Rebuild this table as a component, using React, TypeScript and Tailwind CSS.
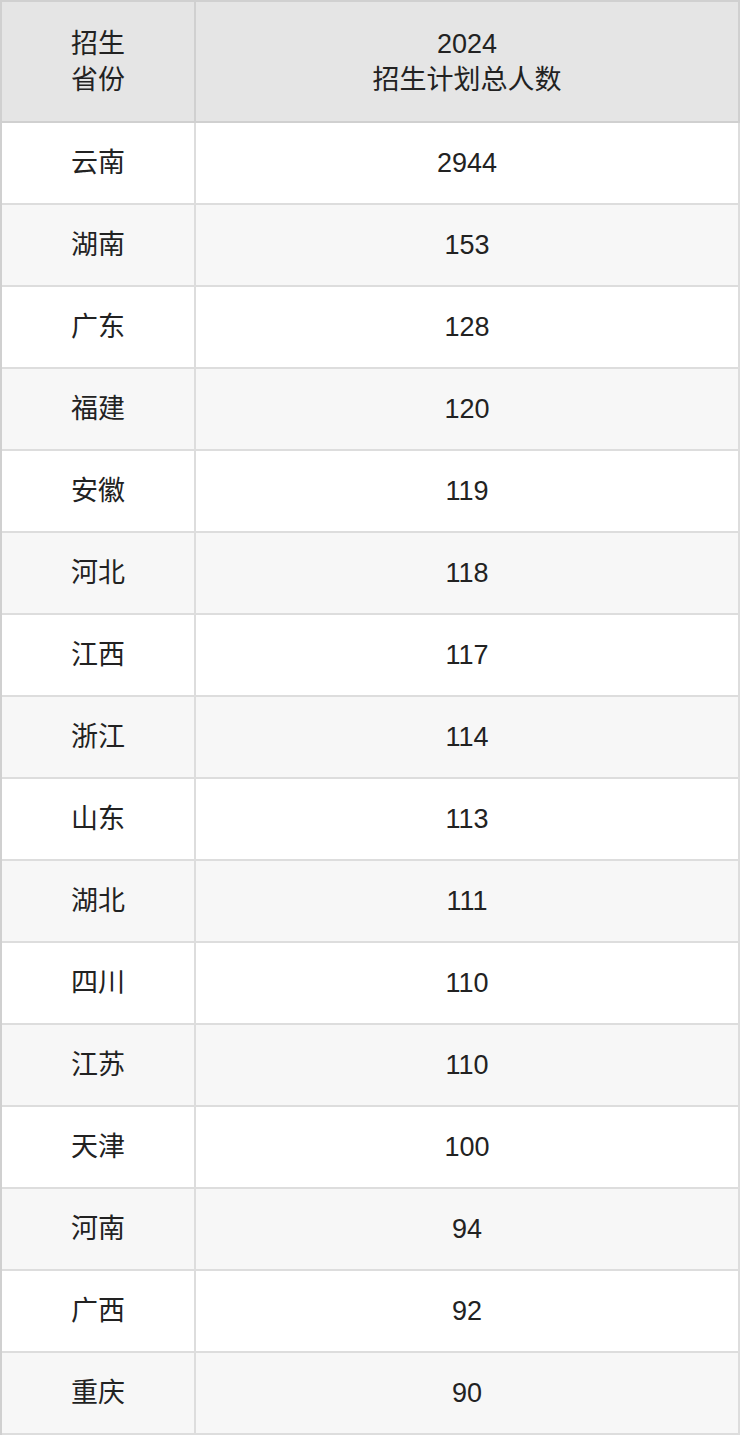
const rows: [string, string][] = [
  ["云南", "2944"],
  ["湖南", "153"],
  ["广东", "128"],
  ["福建", "120"],
  ["安徽", "119"],
  ["河北", "118"],
  ["江西", "117"],
  ["浙江", "114"],
  ["山东", "113"],
  ["湖北", "111"],
  ["四川", "110"],
  ["江苏", "110"],
  ["天津", "100"],
  ["河南", "94"],
  ["广西", "92"],
  ["重庆", "90"],
];

const font = {
  fontFamily: '"Liberation Sans", "Noto Sans CJK SC", sans-serif',
};

export default function App() {
  return (
    <div className="w-[740px] bg-white text-[#222222] text-[27px]" style={font}>
      <div className="border-t-2 border-l-2 border-[#d0d0d0]">
        <div className="flex bg-[#e5e5e5]">
          <div className="w-[194px] h-[121px] flex flex-col items-center justify-center leading-[36px] border-r-2 border-b-2 border-[#d0d0d0]">
            <span>招生</span>
            <span>省份</span>
          </div>
          <div className="flex-1 h-[121px] flex flex-col items-center justify-center leading-[36px] border-r-2 border-b-2 border-[#d0d0d0]">
            <span>2024</span>
            <span>招生计划总人数</span>
          </div>
        </div>
        {rows.map(([province, count], i) => (
          <div
            key={province + i}
            className={i % 2 === 0 ? "flex bg-white" : "flex bg-[#f7f7f7]"}
          >
            <div className="w-[194px] h-[82px] flex items-center justify-center border-r-2 border-b-2 border-[#dddddd]">
              {province}
            </div>
            <div className="flex-1 h-[82px] flex items-center justify-center border-r-2 border-b-2 border-[#dddddd]">
              {count}
            </div>
          </div>
        ))}
      </div>
    </div>
  );
}
